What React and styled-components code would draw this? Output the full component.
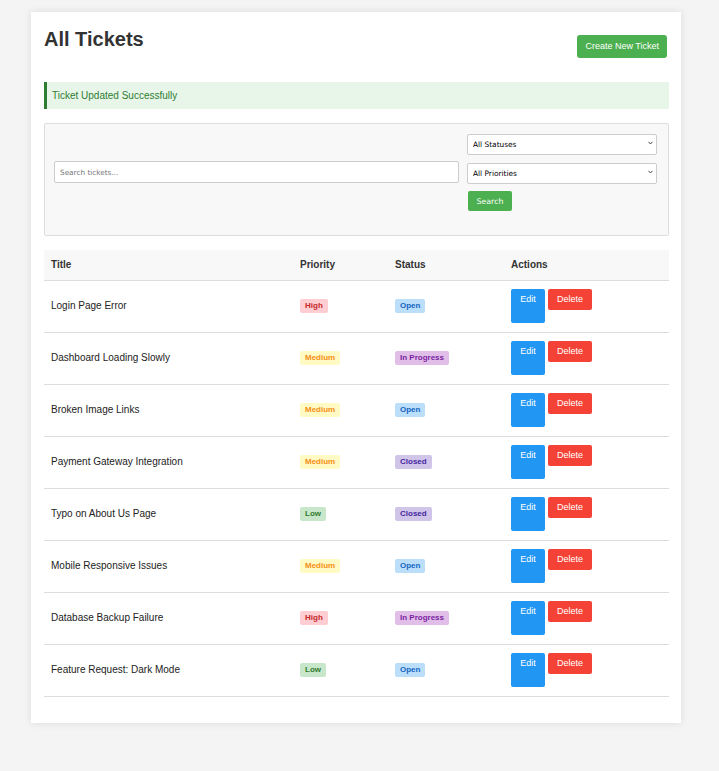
import React from "react";
import styled, { createGlobalStyle } from "styled-components";

const GlobalStyle = createGlobalStyle`
  body {
    margin: 0;
    background: #f4f4f4;
    font-family: "Liberation Sans", Arial, sans-serif;
    color: #333;
  }
`;

const Card = styled.div`
  width: 650px;
  box-sizing: border-box;
  margin: 12px 0 49px 31px;
  padding: 15px 12px 26px 13px;
  background: #fff;
  box-shadow: 0 0 8px rgba(0, 0, 0, 0.1);
`;

const Header = styled.div`
  display: flex;
  justify-content: space-between;
  align-items: flex-start;
`;

const Title = styled.h1`
  margin: 1px 0 0;
  font-size: 20px;
  line-height: 23px;
  font-weight: bold;
  color: #333;
`;

const Button = styled.button`
  border: none;
  border-radius: 2px;
  color: #fff;
  cursor: pointer;
  font-family: "Liberation Sans", Arial, sans-serif;
  font-size: 9px;
  line-height: 11px;
  padding: 5px 9px;
  background: ${(p) => p.$bg};
  height: ${(p) => p.$h || "auto"};
  width: ${(p) => p.$w || "auto"};
  align-self: flex-start;
  display: inline-flex;
  align-items: flex-start;
  justify-content: center;
`;

const CreateButton = styled(Button)`
  margin: 8px 2px 0 0;
  padding: 6px 8px;
  border-radius: 3px;
`;

const Alert = styled.div`
  margin-top: 24px;
  padding: 8px 5px 7px;
  border-left: 3px solid #2e7d32;
  background: #e8f5e9;
  color: #2e7d32;
  font-size: 10px;
  line-height: 12px;
`;

const Filters = styled.form`
  margin-top: 14px;
  display: flex;
  align-items: center;
  gap: 8px;
  padding: 9px 11px 24px 9px;
  background: #f8f8f8;
  border: 1px solid #ddd;
  border-radius: 2px;
`;

const SearchInput = styled.input`
  flex: 1;
  box-sizing: border-box;
  height: 22px;
  padding: 0 5px;
  border: 1px solid #ccc;
  border-radius: 2px;
  font-family: "DejaVu Sans", sans-serif;
  font-size: 7.3px;
  color: #333;
  &::placeholder {
    color: #777;
  }
`;

const FilterColumn = styled.div`
  width: 190px;
  display: flex;
  flex-direction: column;
  gap: 8px;
`;

const SelectWrap = styled.div`
  position: relative;
  height: 21px;
`;

const Select = styled.select`
  appearance: none;
  box-sizing: border-box;
  width: 100%;
  height: 21px;
  padding: 0 14px 0 5px;
  border: 1px solid #ccc;
  border-radius: 2px;
  background: #fff;
  font-family: "DejaVu Sans", sans-serif;
  font-size: 7.4px;
  color: #000;
`;

const Chevron = styled.svg`
  position: absolute;
  right: 4px;
  top: 8px;
  width: 5px;
  height: 4px;
  pointer-events: none;
`;

const SearchButton = styled.button`
  align-self: flex-start;
  margin-left: 1px;
  width: 44px;
  height: 20px;
  border: none;
  border-radius: 2px;
  background: #4caf50;
  color: #fff;
  font-family: "DejaVu Sans", sans-serif;
  font-size: 7.8px;
  padding: 0;
`;

const Table = styled.table`
  margin-top: 14px;
  width: 100%;
  border-collapse: collapse;
  table-layout: fixed;
  font-size: 10px;
`;

const Th = styled.th`
  box-sizing: border-box;
  text-align: left;
  background: #f8f8f8;
  padding: 9px 7px 9px;
  line-height: 12px;
  font-weight: bold;
  color: #333;
  border-bottom: 1px solid #ddd;
  width: ${(p) => p.$w};
`;

const Td = styled.td`
  padding: 8px 7px 9px;
  border-bottom: 1px solid #ddd;
  vertical-align: middle;
  color: #222;
  line-height: 12px;
`;

const badgeColors = {
  High: ["#ffcdd2", "#c62828"],
  Medium: ["#fff9c4", "#f58f17"],
  Low: ["#c8e6c9", "#2e7d32"],
  Open: ["#bbdefb", "#1565c0"],
  "In Progress": ["#e1bee7", "#7b1fa2"],
  Closed: ["#d1c4e9", "#4527a0"],
};

const Badge = styled.span`
  display: inline-block;
  padding: 3px 5px;
  border-radius: 2px;
  font-size: 8px;
  line-height: 8px;
  font-weight: bold;
  background: ${(p) => badgeColors[p.$v][0]};
  color: ${(p) => badgeColors[p.$v][1]};
`;

const Actions = styled.div`
  display: flex;
  align-items: flex-start;
  gap: 3px;
`;

const tickets = [
  ["Login Page Error", "High", "Open"],
  ["Dashboard Loading Slowly", "Medium", "In Progress"],
  ["Broken Image Links", "Medium", "Open"],
  ["Payment Gateway Integration", "Medium", "Closed"],
  ["Typo on About Us Page", "Low", "Closed"],
  ["Mobile Responsive Issues", "Medium", "Open"],
  ["Database Backup Failure", "High", "In Progress"],
  ["Feature Request: Dark Mode", "Low", "Open"],
];

const Dropdown = ({ label, options }) => (
  <SelectWrap>
    <Select defaultValue="">
      <option value="">{label}</option>
      {options.map((o) => (
        <option key={o}>{o}</option>
      ))}
    </Select>
    <Chevron viewBox="0 0 5 4">
      <path d="M0.5 0.8 L2.5 3 L4.5 0.8" fill="none" stroke="#333" strokeWidth="0.9" />
    </Chevron>
  </SelectWrap>
);

export default function App() {
  return (
    <>
      <GlobalStyle />
      <Card>
        <Header>
          <Title>All Tickets</Title>
          <CreateButton $bg="#4caf50">Create New Ticket</CreateButton>
        </Header>
        <Alert>Ticket Updated Successfully</Alert>
        <Filters onSubmit={(e) => e.preventDefault()}>
          <SearchInput placeholder="Search tickets..." />
          <FilterColumn>
            <Dropdown label="All Statuses" options={["Open", "In Progress", "Closed"]} />
            <Dropdown label="All Priorities" options={["High", "Medium", "Low"]} />
            <SearchButton type="submit">Search</SearchButton>
          </FilterColumn>
        </Filters>
        <Table>
          <thead>
            <tr>
              <Th $w="249px">Title</Th>
              <Th $w="95px">Priority</Th>
              <Th $w="116px">Status</Th>
              <Th $w="165px">Actions</Th>
            </tr>
          </thead>
          <tbody>
            {tickets.map(([title, priority, status]) => (
              <tr key={title}>
                <Td>{title}</Td>
                <Td>
                  <Badge $v={priority}>{priority}</Badge>
                </Td>
                <Td>
                  <Badge $v={status}>{status}</Badge>
                </Td>
                <Td>
                  <Actions>
                    <Button $bg="#2196f3" $h="34px" $w="34px">
                      Edit
                    </Button>
                    <Button $bg="#f44336">Delete</Button>
                  </Actions>
                </Td>
              </tr>
            ))}
          </tbody>
        </Table>
      </Card>
    </>
  );
}
